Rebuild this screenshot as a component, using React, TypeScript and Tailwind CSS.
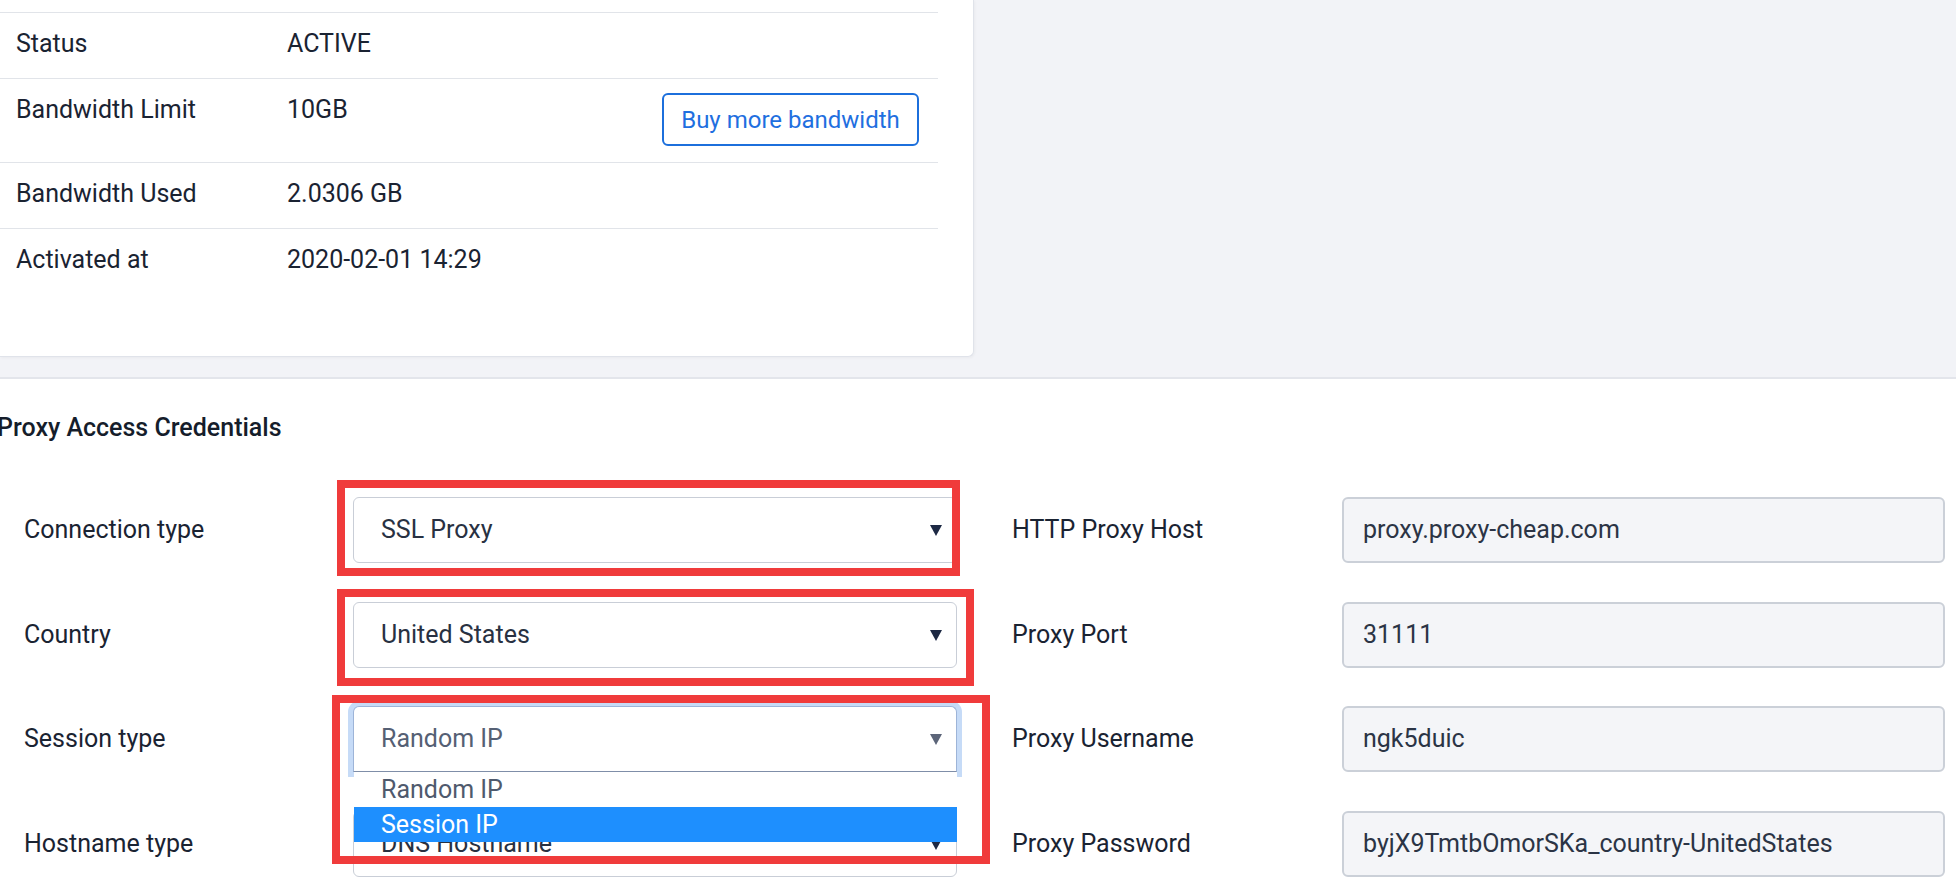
import React from 'react';

const infoRows = [
  { label: 'Status', value: 'ACTIVE' },
  { label: 'Bandwidth Limit', value: '10GB', action: 'Buy more bandwidth' },
  { label: 'Bandwidth Used', value: '2.0306 GB' },
  { label: 'Activated at', value: '2020-02-01 14:29' },
];

const credentials = [
  { label: 'HTTP Proxy Host', value: 'proxy.proxy-cheap.com' },
  { label: 'Proxy Port', value: '31111' },
  { label: 'Proxy Username', value: 'ngk5duic' },
  { label: 'Proxy Password', value: 'byjX9TmtbOmorSKa_country-UnitedStates' },
];

const Arrow = ({ muted }: { muted?: boolean }) => (
  <svg width="12" height="12" viewBox="0 0 12 12" className="shrink-0">
    <path d="M0 1h12L6 12z" fill={muted ? '#5c6579' : '#1d2944'} />
  </svg>
);

const RedBox = ({ className }: { className: string }) => (
  <div className={`pointer-events-none absolute z-20 border-[8px] border-[#f03b3b] ${className}`} />
);

const FakeSelect = ({ value, focused }: { value: string; focused?: boolean }) => (
  <div
    className={`flex h-[66px] w-[604px] items-center justify-between rounded-[6px] border bg-white pl-[27px] pr-[14px] ${
      focused
        ? 'border-[#9db4d8] rounded-b-none border-b-[#7f8ea8] text-[#556074] shadow-[0_0_0_5px_#c6dbf7]'
        : 'border-[#c9ced7] text-[#283142]'
    }`}
  >
    <span>{value}</span>
    <Arrow muted={focused} />
  </div>
);

export default function App() {
  return (
    <div className="h-[892px] w-full overflow-hidden bg-white font-['Roboto',sans-serif] text-[25px] leading-[36px] text-[#1a2332]">
      {/* plan details card */}
      <div className="flex h-[377px] bg-[#f2f3f7]">
        <div className="h-[357px] w-[974px] rounded-br-[6px] border-r border-b border-[#e0e3ea] bg-white pr-[35px] shadow-[1px_1px_3px_rgba(0,0,0,0.04)]">
          <div className="h-[12px]" />
          {infoRows.map((row) => (
            <div key={row.label} className="flex border-t border-[#e1e4e9] pt-[13px] pb-[16px]">
              <div className="w-[287px] pl-[16px]">{row.label}</div>
              <div className="flex-1">{row.value}</div>
              {row.action && (
                <button className="mt-px mr-[19px] h-[53px] w-[257px] rounded-[6px] border-2 border-[#1c6fdc] bg-white text-[24px] text-[#1f6fe0]">
                  {row.action}
                </button>
              )}
            </div>
          ))}
        </div>
      </div>

      {/* credentials */}
      <div className="border-t-2 border-[#e3e5eb]">
        <h2 className="-ml-[3px] pt-[31px] font-medium text-[#151d2b]">Proxy Access Credentials</h2>
        <div className="mt-[51px] flex">
          <div className="flex w-[988px] flex-col gap-[38.5px] pl-[24px]">
            <div className="flex items-center">
              <div className="w-[329px]">Connection type</div>
              <div className="relative">
                <FakeSelect value="SSL Proxy" />
                <RedBox className="-top-[17px] -left-[16px] -right-[3px] -bottom-[13px]" />
              </div>
            </div>
            <div className="flex items-center">
              <div className="w-[329px]">Country</div>
              <div className="relative">
                <FakeSelect value="United States" />
                <RedBox className="-top-[13px] -left-[16px] -right-[17px] -bottom-[18px]" />
              </div>
            </div>
            <div className="relative z-10 flex items-center">
              <div className="w-[329px]">Session type</div>
              <div className="relative">
                <FakeSelect value="Random IP" focused />
                <div className="absolute top-full left-[1px] right-0 z-10 bg-white">
                  <div className="h-[35px] pl-[27px] leading-[35px] text-[#4f5a6d]">Random IP</div>
                  <div className="h-[35px] bg-[#1e8ffe] pl-[27px] leading-[35px] text-white">Session IP</div>
                </div>
                <RedBox className="-top-[11px] -left-[21px] -right-[33px] -bottom-[92px]" />
              </div>
            </div>
            <div className="flex items-center">
              <div className="w-[329px]">Hostname type</div>
              <FakeSelect value="DNS Hostname" />
            </div>
          </div>

          <div className="flex flex-1 flex-col gap-[38.5px] pl-[24px]">
            {credentials.map((c) => (
              <div key={c.label} className="flex items-center">
                <div className="w-[330px]">{c.label}</div>
                <div className="flex h-[66px] w-[603px] items-center rounded-[6px] border-2 border-[#cbd0d8] bg-[#f4f5f8] pl-[19px] text-[#2b3445]">
                  {c.value}
                </div>
              </div>
            ))}
          </div>
        </div>
      </div>
    </div>
  );
}
